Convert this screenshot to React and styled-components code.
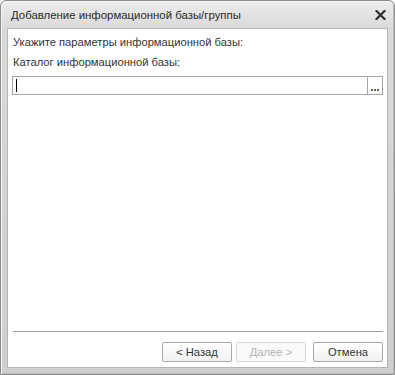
import React from 'react'
import styled, { createGlobalStyle } from 'styled-components'

const GlobalStyle = createGlobalStyle`
html, body {
    margin: 0;
    padding: 0;
    background: #ffffff;
}
body {
    font-family: 'Liberation Sans', Arial, sans-serif;
    font-size: 11.2px;
    color: #333333;
}
`

const Window = styled.div`
width: 395px;
height: 375px;
box-sizing: border-box;
display: flex;
flex-direction: column;
border: 1px solid #8c8c8c;
border-radius: 6px 6px 0 0;
background: linear-gradient(to bottom, #ececec 0px, #d9d9d9 28px, #cfcfcf 100%);
box-shadow: inset 1px 1px 0 #f6f6f6, inset -1px -1px 0 #bdbdbd;
overflow: hidden;
`

const TitleBar = styled.div`
height: 27px;
flex: none;
display: flex;
align-items: center;
justify-content: space-between;
padding: 0 7px 0 10px;
`

const Title = styled.div`
font-size: 11.4px;
color: #2b2b2b;
padding-top: 1px;
`

const CloseButton = styled.div`
width: 14px;
height: 14px;
display: flex;
align-items: center;
justify-content: center;
`

const Body = styled.div`
flex: 1;
margin: 0 6px 6px 6px;
background: #ffffff;
border: 1px solid #b4b4b4;
display: flex;
flex-direction: column;
padding: 6px 4px 5px 4px;
`

const Label = styled.div`
height: 14px;
line-height: 14px;
padding-left: 1px;
margin-bottom: ${p => p.$gap || 0}px;
`

const Field = styled.div`
height: 19px;
box-sizing: border-box;
display: flex;
border: 1px solid #a5a5a5;
margin-top: 2px;
`

const FieldInput = styled.div`
flex: 1;
position: relative;
`

const Caret = styled.span`
position: absolute;
left: 3px;
top: 2px;
width: 1px;
height: 13px;
background: #000000;
`

const EllipsisButton = styled.div`
width: 14px;
border-left: 1px solid #a5a5a5;
display: flex;
align-items: flex-end;
justify-content: center;
padding-bottom: 3px;
gap: 1px;
span {
    width: 2px;
    height: 2px;
    background: #6b6246;
}
`

const Spacer = styled.div`
flex: 1;
`

const Separator = styled.div`
height: 1px;
background: #a0a0a0;
margin: 0 0 10px 1px;
`

const ButtonRow = styled.div`
display: flex;
justify-content: flex-end;
`

const Button = styled.div`
width: 70px;
height: 20px;
box-sizing: border-box;
margin-left: ${p => p.$gap || 0}px;
display: flex;
align-items: center;
justify-content: center;
border: 1px solid ${p => (p.$disabled ? '#d6d6d6' : '#a8a8a8')};
border-radius: 2px;
background: ${p => (p.$disabled ? '#fafafa' : 'linear-gradient(to bottom, #ffffff, #f1f1f1)')};
color: ${p => (p.$disabled ? '#b4b4b4' : '#333333')};
`

export default function App() {
    return (
        <>
            <GlobalStyle />
            <Window>
                <TitleBar>
                    <Title>Добавление информационной базы/группы</Title>
                    <CloseButton>
                        <svg width="11" height="10" viewBox="0 0 11 10">
                            <path d="M1.5 1 L9.5 9 M9.5 1 L1.5 9" stroke="#2e2e2e" strokeWidth="2.2" strokeLinecap="square" />
                        </svg>
                    </CloseButton>
                </TitleBar>
                <Body>
                    <Label $gap={6}>Укажите параметры информационной базы:</Label>
                    <Label $gap={5}>Каталог информационной базы:</Label>
                    <Field>
                        <FieldInput><Caret /></FieldInput>
                        <EllipsisButton><span /><span /><span /></EllipsisButton>
                    </Field>
                    <Spacer />
                    <Separator />
                    <ButtonRow>
                        <Button>&lt; Назад</Button>
                        <Button $gap={4} $disabled>Далее &gt;</Button>
                        <Button $gap={7}>Отмена</Button>
                    </ButtonRow>
                </Body>
            </Window>
        </>
    )
}
